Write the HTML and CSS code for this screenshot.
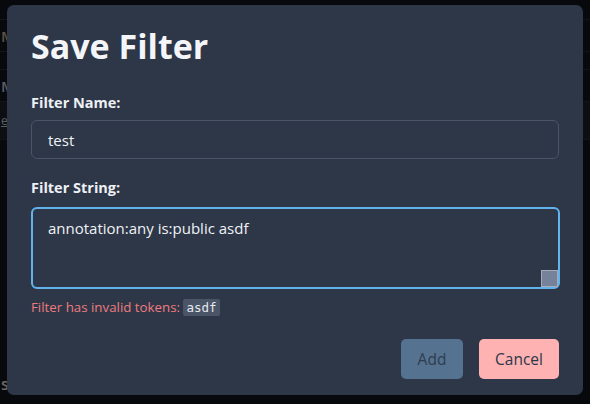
FILE: index.html
```html
<!DOCTYPE html>
<html lang="en">
<head>
<meta charset="utf-8">
<title>Save Filter</title>
<link rel="stylesheet" href="styles.css">
</head>
<body>
<div class="page">
  <div class="row row-top"></div>
  <div class="row"><span class="frag frag-m1">M</span></div>
  <div class="row row-thin"></div>
  <div class="row"><span class="frag frag-m2">M</span></div>
  <div class="row row-link"><span class="frag frag-link">e-</span></div>
  <div class="spacer"></div>
  <div class="row row-bottom"><span class="frag frag-s">s</span></div>
</div>
<div class="overlay">
  <form class="modal">
    <h1 class="title">Save Filter</h1>
    <label class="label" for="fname">Filter Name:</label>
    <input class="input" id="fname" type="text" value="test">
    <label class="label label-second" for="fstring">Filter String:</label>
    <div class="textarea-wrap">
      <textarea class="textarea" id="fstring">annotation:any is:public asdf</textarea>
      <span class="resize"></span>
    </div>
    <p class="error">Filter has invalid tokens: <code class="code">asdf</code></p>
    <div class="actions">
      <button type="button" class="btn btn-add" disabled>Add</button>
      <button type="button" class="btn btn-cancel">Cancel</button>
    </div>
  </form>
</div>
</body>
</html>
```

FILE: styles.css
```css
* { box-sizing: border-box; }
html, body { margin: 0; padding: 0; }
body {
  width: 590px;
  height: 404px;
  overflow: hidden;
  background: #0d0f14;
  font-family: "Open Sans", "Noto Sans", sans-serif;
  color: #e2e8f0;
}
.page {
  display: flex;
  flex-direction: column;
  height: 404px;
}
.row {
  height: 32px;
  border-bottom: 1px solid #1c1f27;
  display: flex;
  align-items: center;
  padding-left: 1px;
  font-size: 15px;
  font-weight: 600;
}
.row-top { height: 20px; }
.row-thin { height: 18px; }
.row-link { height: 38px; background: #14161c; }
.spacer { flex: 1; }
.row-bottom { border-bottom: none; height: 40px; }
.frag { color: #8a8f9c; }
.frag-m1 { color: #8e8262; }
.frag-link { font-size: 12px; font-weight: 400; text-decoration: underline; color: #8a8f9c; }
.frag-s { color: #a8a090; font-size: 16px; }

.overlay {
  position: fixed;
  inset: 0;
  background: rgba(0, 0, 0, 0.35);
}
.modal {
  position: absolute;
  left: 7px;
  top: 5px;
  width: 576px;
  height: 390px;
  background: #2d3748;
  border-radius: 7px;
  padding: 18px 24px 0 24px;
  display: flex;
  flex-direction: column;
}
.title {
  margin: 0;
  font-size: 34px;
  line-height: 46px;
  font-weight: 700;
  color: #f4f5f8;
}
.label {
  margin-top: 24px;
  font-size: 14.5px;
  line-height: 20px;
  font-weight: 700;
  color: #edf0f4;
}
.label-second { margin-top: 19px; }
.input {
  margin-top: 7px;
  height: 39px;
  width: 528px;
  background: #2d3748;
  border: 1px solid #4a5568;
  border-radius: 6px;
  padding: 0 16px;
  font-family: inherit;
  font-size: 15px;
  color: #f0f2f5;
  outline: none;
}
.textarea-wrap {
  margin-top: 9px;
  position: relative;
  width: 529px;
  height: 82px;
}
.textarea {
  display: block;
  width: 100%;
  height: 100%;
  resize: none;
  background: #2d3748;
  border: 2px solid #63b3ed;
  border-radius: 6px;
  padding: 8px 15px;
  font-family: inherit;
  font-size: 15px;
  line-height: 22px;
  color: #f0f2f5;
  outline: none;
}
.resize {
  position: absolute;
  right: 2px;
  bottom: 2px;
  width: 17px;
  height: 17px;
  background: #76829a;
  border: 1px solid #a3acbd;
}
.error {
  margin: 9px 0 0 0;
  font-size: 13.3px;
  line-height: 18px;
  color: #ef7b7e;
}
.code {
  font-family: "DejaVu Sans Mono", "Liberation Mono", monospace;
  font-size: 12.5px;
  background: #4a5568;
  color: #e6e9ee;
  padding: 1px 3px;
  border-radius: 2px;
}
.actions {
  margin-top: 22px;
  display: flex;
  justify-content: flex-end;
  gap: 16px;
}
.btn {
  height: 40px;
  border: none;
  border-radius: 5px;
  font-family: inherit;
  font-size: 15.5px;
  color: #2d3748;
  padding: 0;
}
.btn-add {
  width: 62px;
  background: #557290;
  color: #2f3c4e;
}
.btn-cancel {
  width: 80px;
  background: #feb2b2;
  color: #2d3748;
}
```
